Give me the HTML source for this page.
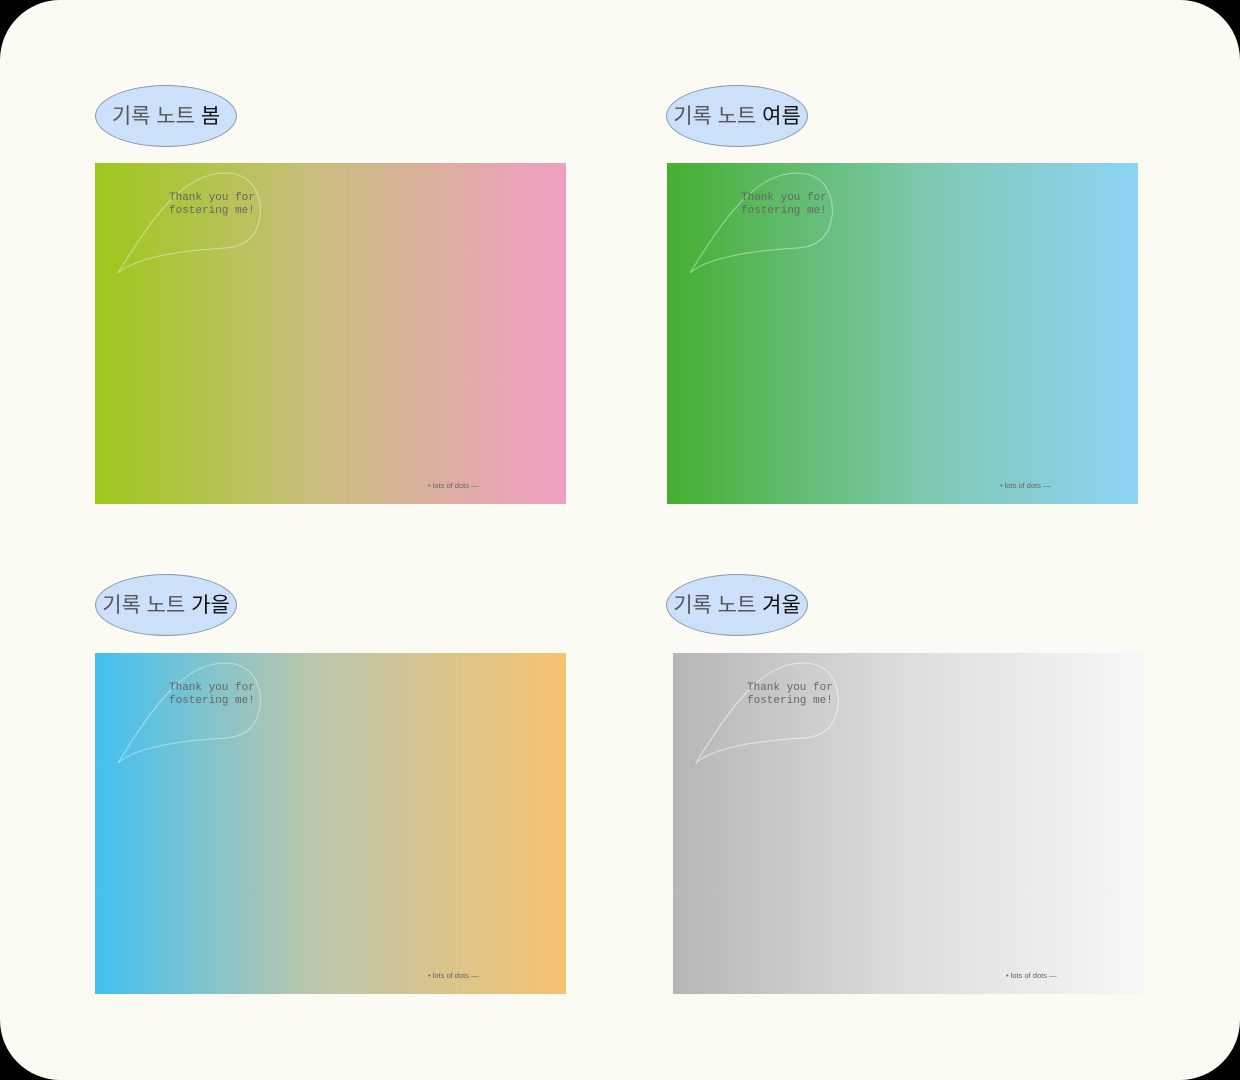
<!DOCTYPE html>
<html><head><meta charset="utf-8"><style>
html,body{margin:0;padding:0;background:#000;width:1240px;height:1080px;overflow:hidden}
.panel{position:absolute;left:0;top:0;width:1240px;height:1080px;background:#fbfbf3;border-radius:60px}
.tag{position:absolute;width:142px;height:62px;border-radius:50%;background:#cde0fa;border:1px solid #8a9aac;box-sizing:border-box}
.tag span{position:absolute;left:50%;transform:translateX(-50%);top:14px;font:21px "Liberation Sans","Noto Sans CJK KR",sans-serif;color:#555;white-space:nowrap}
.tag b{font-weight:normal;color:#111}
.card{position:absolute;width:471px;height:341px}
.card svg{position:absolute;left:0;top:0}
.msg{position:absolute;left:74px;top:29px;font:11px/13px "Liberation Mono",monospace;color:#666;white-space:pre}
.dots{position:absolute;left:333px;top:318px;font:7.5px "Liberation Sans",sans-serif;color:#666;white-space:nowrap}
</style></head><body><div class="panel">
<div class="tag" style="left:95px;top:85px"><span>기록 노트 <b>봄</b></span></div>
<div class="tag" style="left:666px;top:85px"><span>기록 노트 <b>여름</b></span></div>
<div class="tag" style="left:95px;top:574px"><span>기록 노트 <b>가을</b></span></div>
<div class="tag" style="left:666px;top:574px"><span>기록 노트 <b>겨울</b></span></div>

<div class="card" style="left:95px;top:163px;background:linear-gradient(90deg,#9dc81a,#c7be7a 45%,#f09fc3)">
<svg width="471" height="341"><path d="M23,110 C60,50 90,10 130,10 C165,10 168,45 164,58 C160,78 145,84 130,85 C80,88 40,95 23,110" fill="none" stroke="rgba(255,255,255,.45)" stroke-width="1"/></svg>
<div class="msg">Thank you for
fostering me!</div><div class="dots">• lots of dots —</div></div>

<div class="card" style="left:667px;top:163px;background:linear-gradient(90deg,#45af2f,#7ec8b0 55%,#8fd3f5)">
<svg width="471" height="341"><path d="M23,110 C60,50 90,10 130,10 C165,10 168,45 164,58 C160,78 145,84 130,85 C80,88 40,95 23,110" fill="none" stroke="rgba(255,255,255,.45)" stroke-width="1"/></svg>
<div class="msg">Thank you for
fostering me!</div><div class="dots">• lots of dots —</div></div>

<div class="card" style="left:95px;top:653px;background:linear-gradient(90deg,#42c0f1,#b9c6ad 45%,#f5c270)">
<svg width="471" height="341"><path d="M23,110 C60,50 90,10 130,10 C165,10 168,45 164,58 C160,78 145,84 130,85 C80,88 40,95 23,110" fill="none" stroke="rgba(255,255,255,.45)" stroke-width="1"/></svg>
<div class="msg">Thank you for
fostering me!</div><div class="dots">• lots of dots —</div></div>

<div class="card" style="left:673px;top:653px;background:linear-gradient(90deg,#b5b6b5,#dcdddc 50%,#f7f7f9)">
<svg width="471" height="341"><path d="M23,110 C60,50 90,10 130,10 C165,10 168,45 164,58 C160,78 145,84 130,85 C80,88 40,95 23,110" fill="none" stroke="rgba(255,255,255,.6)" stroke-width="1"/></svg>
<div class="msg">Thank you for
fostering me!</div><div class="dots">• lots of dots —</div></div>
</div></body></html>
